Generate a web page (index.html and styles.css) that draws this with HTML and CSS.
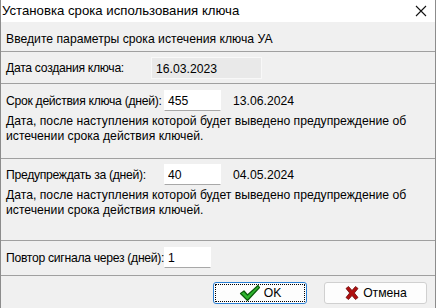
FILE: index.html
```html
<!DOCTYPE html>
<html lang="ru">
<head>
  <meta charset="UTF-8" />
  <title>Установка срока использования ключа</title>
  <link rel="stylesheet" href="styles.css">
</head>
<body>
  <div class="window">
    <div class="titlebar">
      <span class="title">Установка срока использования ключа</span>
      <span class="close">
        <svg width="12" height="12" viewBox="0 0 12 12"><path d="M1 1 L11 11 M11 1 L1 11" stroke="#111" stroke-width="1.1" fill="none"/></svg>
      </span>
    </div>

    <div class="section intro">Введите параметры срока истечения ключа УА</div>

    <div class="section created">
      <span class="label short">Дата создания ключа:</span>
      <span class="readonly">16.03.2023</span>
    </div>

    <div class="section term">
      <div class="row">
        <span class="label">Срок действия ключа (дней):</span>
        <input class="field" type="text" value="455">
        <span class="date">13.06.2024</span>
      </div>
      <p class="note">Дата, после наступления которой будет выведено предупреждение об истечении срока действия ключей.</p>
    </div>

    <div class="section warn">
      <div class="row">
        <span class="label">Предупреждать за (дней):</span>
        <input class="field" type="text" value="40">
        <span class="date">04.05.2024</span>
      </div>
      <p class="note">Дата, после наступления которой будет выведено предупреждение об истечении срока действия ключей.</p>
    </div>

    <div class="section repeat">
      <div class="row">
        <span class="label">Повтор сигнала через (дней):</span>
        <input class="field narrow" type="text" value="1">
      </div>
    </div>

    <div class="buttons">
      <button class="btn ok">
        <svg width="22" height="18" viewBox="0 0 22 18"><path d="M1.5 9.5 L5 7 L8.5 11 L19 1.5 L20.5 3.5 L8.5 16.5 Z" fill="#2fb52f" stroke="#0b5a0b" stroke-width="1.2" stroke-linejoin="round"/></svg>
        OK
      </button>
      <button class="btn cancel">
        <svg width="16" height="16" viewBox="0 0 16 16"><path d="M2 3.5 L4.5 1.5 L8 5.5 L11.5 1.5 L14 3.5 L10.3 8 L14 12.5 L11.5 14.5 L8 10.5 L4.5 14.5 L2 12.5 L5.7 8 Z" fill="#b01010" stroke="#6a0606" stroke-width="0.8" stroke-linejoin="round"/></svg>
        Отмена
      </button>
    </div>
  </div>
</body>
</html>
```

FILE: styles.css
```css
* {
  box-sizing: border-box;
}

body {
  margin: 0;
  font-family: 'Liberation Sans', Arial, sans-serif;
  font-size: 12.2px;
  color: #000;
  background: #f0f0f0;
}

.window {
  width: 436px;
  height: 308px;
  background: #f0f0f0;
  border-left: 1px solid #8c8c8c;
  border-right: 1px solid #8c8c8c;
  display: flex;
  flex-direction: column;
}

.titlebar {
  height: 22px;
  background: #fff;
  display: flex;
  align-items: center;
  justify-content: space-between;
  padding: 0 8px 1px 1px;
}

.title {
  font-size: 13.2px;
  color: #000;
}

.close {
  display: flex;
}

.section {
  border-bottom: 1px solid #a0a0a0;
  padding-left: 5px;
}

.intro {
  height: 30px;
  display: flex;
  align-items: center;
  padding-top: 4px;
}

.created {
  height: 32px;
  display: flex;
  align-items: center;
}

.term {
  height: 75px;
  padding-top: 6px;
}

.warn {
  height: 82px;
  padding-top: 5px;
}

.repeat {
  height: 35px;
  padding-top: 6px;
}

.row {
  display: flex;
  align-items: center;
}

.label {
  width: 158px;
  flex: none;
  white-space: nowrap;
  letter-spacing: -0.3px;
}

.label.short {
  width: 145px;
}

.readonly {
  width: 111px;
  height: 22px;
  background: #e9e9e9;
  border: 1px solid #f8f8f8;
  padding: 2px 4px 0;
  display: flex;
  align-items: center;
}

.field {
  width: 57px;
  height: 21px;
  margin: 0;
  border: 1px solid #fff;
  border-bottom-color: #a8a8a8;
  background: #fff;
  padding: 0 3px;
  font-family: inherit;
  font-size: 12.2px;
  color: #000;
  outline: none;
}

.field.narrow {
  width: 47px;
}

.date {
  margin-left: 12px;
}

.note {
  margin: 3px 0 0;
  line-height: 15px;
  width: 420px;
}

.buttons {
  flex: 1;
  display: flex;
  justify-content: flex-end;
  align-items: flex-start;
  gap: 17px;
  padding: 6px 8px 0 0;
}

.btn {
  height: 22px;
  display: flex;
  align-items: center;
  justify-content: center;
  gap: 3px;
  font-family: inherit;
  font-size: 12.2px;
  color: #000;
  background: #fdfdfd;
  border: 1px solid #d0d0d0;
  border-radius: 3px;
  padding: 0;
}

.btn.ok {
  width: 94px;
  border-color: #2a7fd4;
  outline: 1px dotted #000;
  outline-offset: -3px;
}

.btn.cancel {
  width: 103px;
}
```
